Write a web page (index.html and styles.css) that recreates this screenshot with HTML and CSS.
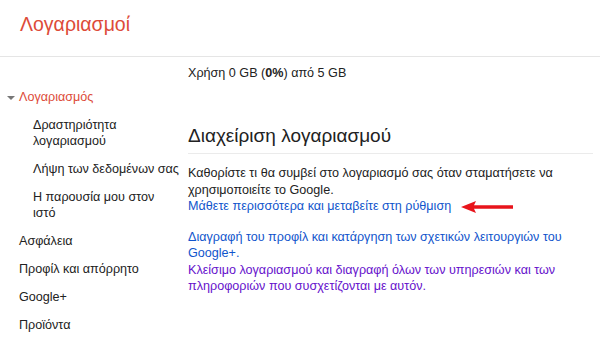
FILE: index.html
```html
<!DOCTYPE html>
<html lang="el">
<head>
  <meta charset="UTF-8">
  <title>Λογαριασμοί</title>
  <link rel="stylesheet" href="styles.css">
</head>
<body>
  <div class="header">Λογαριασμοί</div>

  <div class="page">
    <ul class="nav">
      <li class="active"><span class="caret"></span>Λογαριασμός</li>
      <li class="sub">Δραστηριότητα<br>λογαριασμού</li>
      <li class="sub">Λήψη των δεδομένων σας</li>
      <li class="sub">Η παρουσία μου στον<br>ιστό</li>
      <li>Ασφάλεια</li>
      <li>Προφίλ και απόρρητο</li>
      <li>Google+</li>
      <li>Προϊόντα</li>
    </ul>

    <div class="main">
      <p class="usage">Χρήση 0 GB (<b>0%</b>) από 5 GB</p>

      <h2>Διαχείριση λογαριασμού</h2>

      <p class="text">
        Καθορίστε τι θα συμβεί στο λογαριασμό σας όταν σταματήσετε να χρησιμοποιείτε το Google.<br>
        <a href="#" class="link">Μάθετε περισσότερα και μεταβείτε στη ρύθμιση</a><svg class="arrow" width="52" height="12" viewBox="0 0 52 12">
          <path d="M0 6 L15 0 L13 4.3 L52 4.3 L52 7.7 L13 7.7 L15 12 Z" fill="#e8141b"/>
        </svg>
      </p>

      <p class="text">
        <a href="#" class="link">Διαγραφή του προφίλ και κατάργηση των σχετικών λειτουργιών του Google+.</a><br>
        <a href="#" class="link visited">Κλείσιμο λογαριασμού και διαγραφή όλων των υπηρεσιών και των πληροφοριών που συσχετίζονται με αυτόν.</a>
      </p>
    </div>
  </div>
</body>
</html>
```

FILE: styles.css
```css
* { box-sizing: border-box; }
body {
  margin: 0;
  font-family: "Liberation Sans", Arial, sans-serif;
  font-size: 12.6px;
  color: #222;
  background-color: #fff;
}
.header {
  height: 57px;
  padding: 13px 20px 0;
  font-size: 19.5px;
  color: #dd4b39;
  border-bottom: 1px solid #e5e5e5;
}
.page {
  display: flex;
}
.nav {
  list-style: none;
  margin: 0;
  padding: 26px 0 0;
  width: 188px;
  flex-shrink: 0;
}
.nav li {
  padding: 6px 0 6px 19px;
  line-height: 16px;
  color: #222;
}
.nav li.sub {
  padding-left: 33px;
  padding-right: 2px;
}
.nav li.active {
  color: #dd4b39;
  position: relative;
}
.caret {
  position: absolute;
  left: 7px;
  top: 13px;
  border-left: 4px solid transparent;
  border-right: 4px solid transparent;
  border-top: 4px solid #777;
}
.main {
  width: 405px;
  padding-top: 8px;
}
.usage {
  margin: 0;
  line-height: 16px;
}
h2 {
  margin: 44px 0 0;
  padding-bottom: 6px;
  font-size: 19px;
  font-weight: normal;
  color: #222;
  border-bottom: 1px solid #ebebeb;
}
.text {
  margin: 11px 0 0;
  line-height: 16.5px;
}
.text + .text {
  margin-top: 14px;
}
.link {
  color: #15c;
  text-decoration: none;
}
.link.visited {
  color: #61c;
}
.arrow {
  vertical-align: middle;
  margin-left: 10px;
}
```
